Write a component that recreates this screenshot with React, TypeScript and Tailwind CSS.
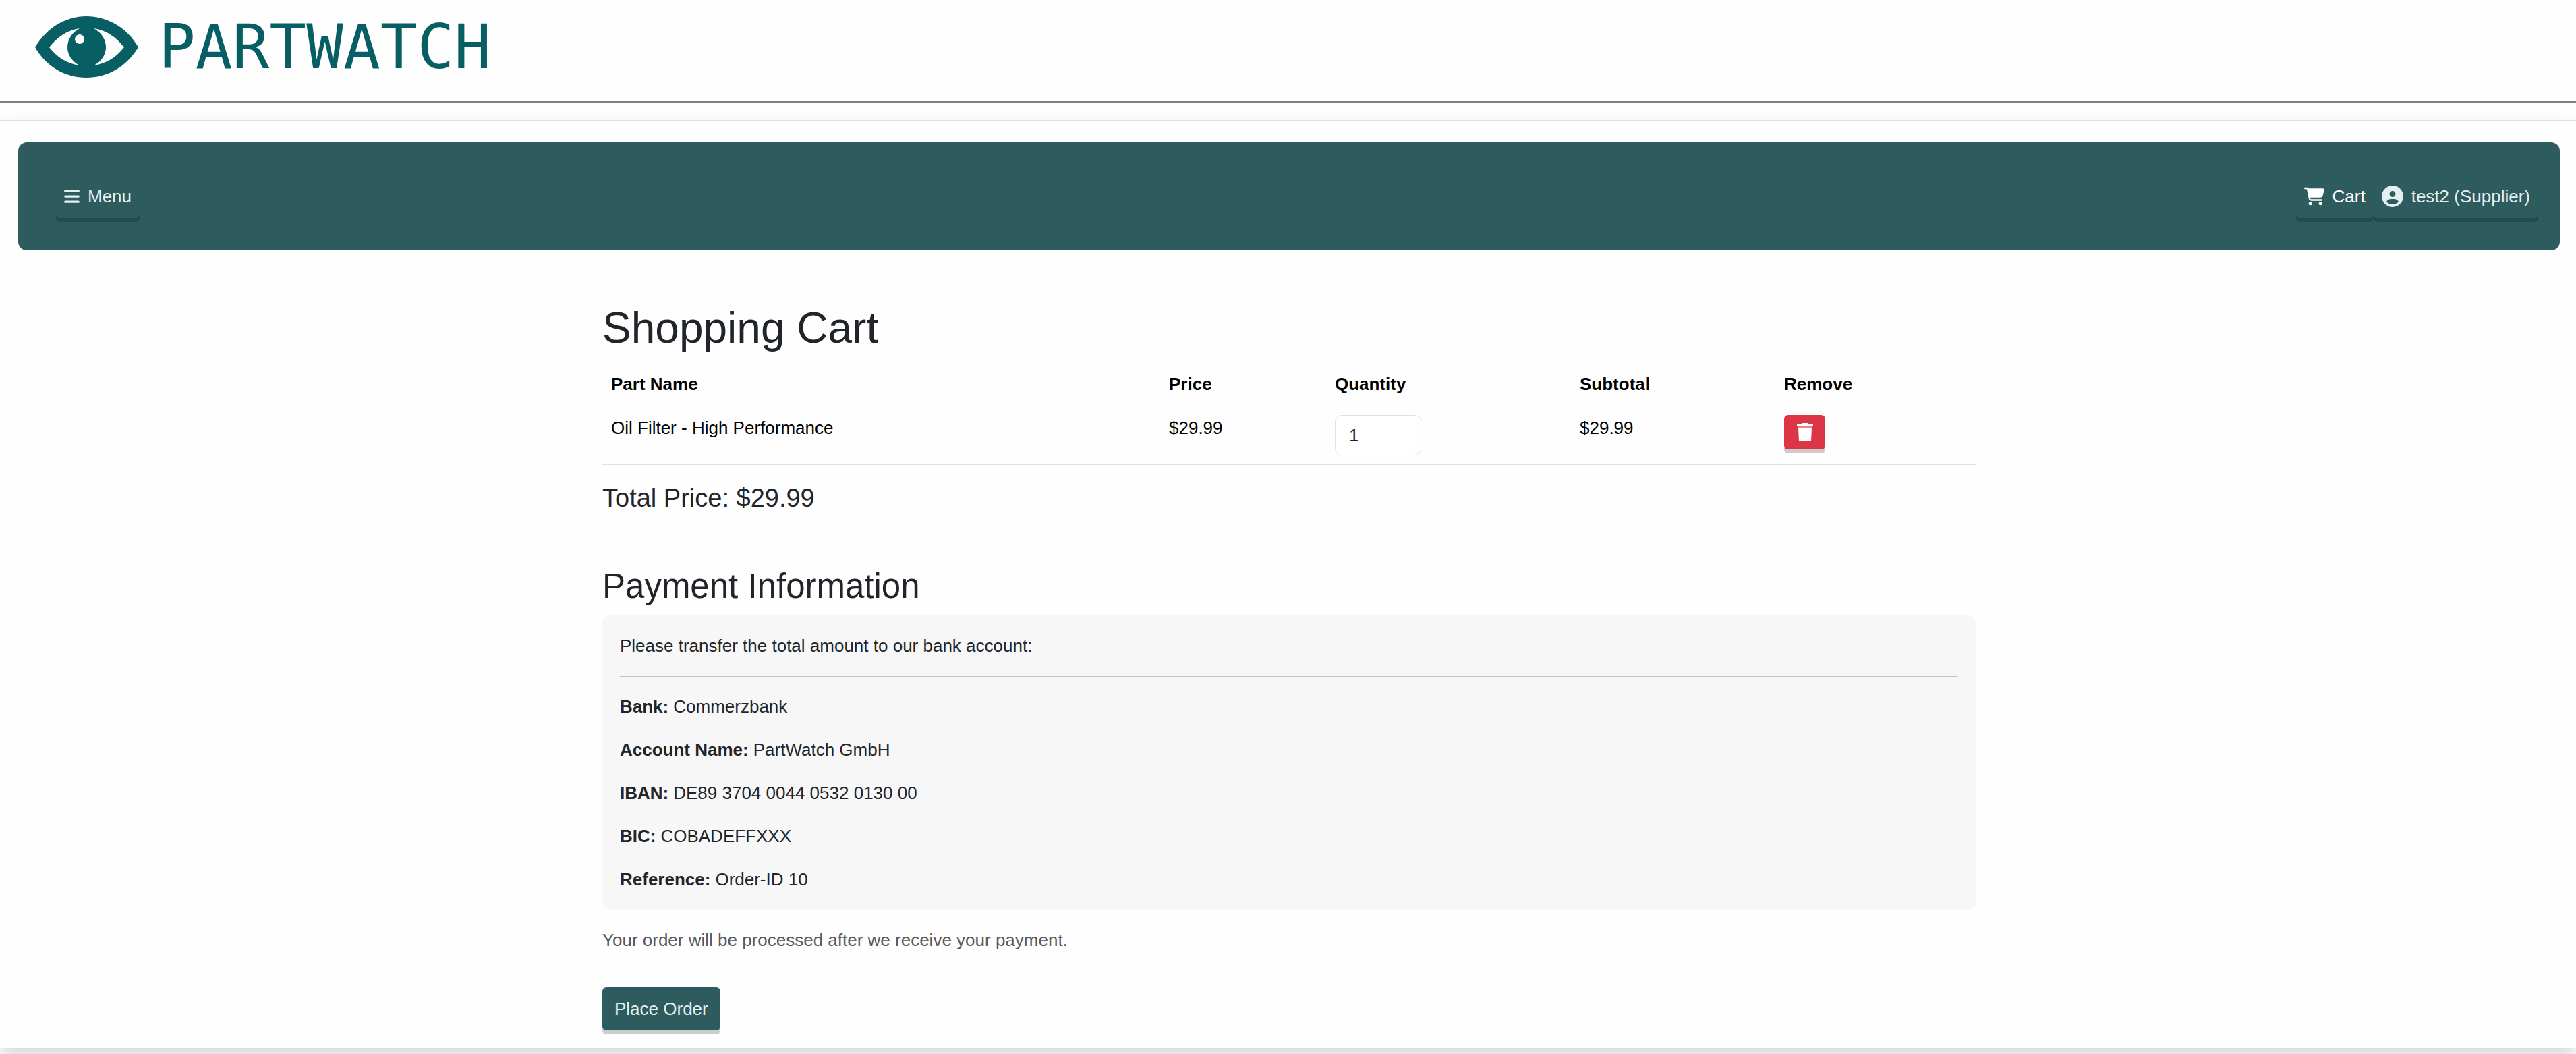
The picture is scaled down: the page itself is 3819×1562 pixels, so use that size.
import { FaBars, FaCartShopping, FaCircleUser } from "react-icons/fa6";

const columns = ["Part Name", "Price", "Quantity", "Subtotal", "Remove"];

const bankDetails = [
  { label: "Bank:", value: "Commerzbank" },
  { label: "Account Name:", value: "PartWatch GmbH" },
  { label: "IBAN:", value: "DE89 3704 0044 0532 0130 00" },
  { label: "BIC:", value: "COBADEFFXXX" },
  { label: "Reference:", value: "Order-ID 10" },
];

function EyeLogo() {
  return (
    <svg viewBox="0 0 153 91" className="h-[91px] w-[153px]" aria-hidden="true">
      <path fill="#085f63" d="M0 46C18 16 46 0 76 0s60 16 77 46C135 76 106 91 76 91S17 76 0 46Z" />
      <path fill="#fefefe" d="M21 46C32 32 46 21 66 18C42 31 42 61 66 73C46 70 32 60 21 46Z" />
      <path fill="#fefefe" d="M132 46C121 32 107 21 87 18C111 31 111 61 87 73C107 70 121 60 132 46Z" />
      <circle cx="66" cy="34" r="7" fill="#fefefe" />
    </svg>
  );
}

function TrashIcon() {
  return (
    <svg viewBox="0 0 24 27" className="h-[27px] w-6" aria-hidden="true">
      <path fill="#fff" d="M0 1h7l1-1h8l1 1h7v4H0Z" />
      <path fill="#fff" opacity=".4" d="M1 5h22l-1 2H2Z" />
      <path fill="#fff" d="M2 7h20l-1 19-1 1H4l-1-1Z" />
    </svg>
  );
}

export default function App() {
  return (
    <div className="min-h-screen bg-[#fefefe] font-['Liberation_Sans',Arial,sans-serif] text-[26px] leading-[38px] text-[#212529]">
      <header className="mb-[26px] flex h-[152px] items-start border-b-[3px] border-[#807e7e] pt-6 pl-13">
        <a href="#" className="flex items-center" aria-label="PartWatch home">
          <EyeLogo />
          <span className="pl-[30px] font-['DejaVu_Sans_Mono',monospace] text-[91px] leading-[91px] text-[#085f63]">PARTWATCH</span>
        </a>
      </header>
      <div className="border-t border-[#dedee6] bg-[#fefefe] pt-8 pb-[26px] pl-[3px] shadow-[0_13px_26px_rgba(0,0,0,0.15)]">
        <nav className="mx-6 flex h-40 items-center justify-between rounded-[13px] bg-[#2e5b5e] pr-8 pl-14 text-[#e4f0f0]">
          <button type="button" className="flex h-16 items-center gap-3 rounded-md px-3 shadow-[0_6px_0_#244a4c]">
            <FaBars className="h-[26px] w-[23px]" />
            Menu
          </button>
          <div className="flex">
            <a href="#cart" className="flex h-16 items-center gap-3 rounded-md px-3 text-white shadow-[0_6px_0_#244a4c]">
              <FaCartShopping className="size-[30px]" />
              Cart
            </a>
            <button type="button" className="flex h-16 items-center gap-3 rounded-md px-3 shadow-[0_6px_0_#244a4c]">
              <FaCircleUser className="size-8" />
              test2 (Supplier)
            </button>
          </div>
        </nav>

        <main className="mx-auto max-w-[2036px] pt-[77px]">
          <h1 className="mb-3 text-[64px] leading-[77px]">Shopping Cart</h1>
          <table className="w-full table-fixed text-left text-black">
            <colgroup>
              <col className="w-[827px]" />
              <col className="w-[246px]" />
              <col className="w-[363px]" />
              <col className="w-[303px]" />
              <col />
            </colgroup>
            <thead>
              <tr className="border-b border-[#dee2e6]">
                {columns.map((name) => (
                  <th key={name} scope="col" className="px-[13px] py-[13px] font-bold">{name}</th>
                ))}
              </tr>
            </thead>
            <tbody>
              <tr className="border-b border-[#dee2e6] align-top">
                <td className="px-[13px] py-[13px]">Oil Filter - High Performance</td>
                <td className="px-[13px] py-[13px]">$29.99</td>
                <td className="px-[13px] py-[13px]">
                  <input
                    type="text"
                    inputMode="numeric"
                    aria-label="Quantity"
                    defaultValue="1"
                    className="block h-[60px] w-32 rounded-[10px] border border-[#dee2e6] bg-white px-5 text-[#212529]"
                  />
                </td>
                <td className="px-[13px] py-[13px]">$29.99</td>
                <td className="px-[13px] py-[13px]">
                  <button
                    type="button"
                    aria-label="Remove"
                    className="flex h-[51px] w-[61px] items-center justify-center rounded-md bg-[#dc3545] shadow-[0_6px_0_#cccccc]"
                  >
                    <TrashIcon />
                  </button>
                </td>
              </tr>
            </tbody>
          </table>
          <h3 className="mt-[26px] text-[38px] leading-[46px]">Total Price: $29.99</h3>

          <h2 className="mt-[77px] mb-[13px] text-[51px] leading-[61px]">Payment Information</h2>
          <section className="rounded-[10px] bg-[#f7f7f7] p-[26px]">
            <p>Please transfer the total amount to our bank account:</p>
            <hr className="mt-[26px] mb-[25px] border-[#c2c3c4]" />
            <dl className="flex flex-col gap-[26px]">
              {bankDetails.map(({ label, value }) => (
                <div key={label} className="flex gap-[7px]">
                  <dt className="font-bold">{label}</dt>
                  <dd>{value}</dd>
                </div>
              ))}
            </dl>
          </section>
          <p className="mt-[26px] text-[#58595c]">Your order will be processed after we receive your payment.</p>
          <button
            type="button"
            className="mt-[51px] flex h-16 items-center rounded-md bg-[#2e5b5e] px-[18px] text-[#e4f0f0] shadow-[0_6px_0_#cccccc]"
          >
            Place Order
          </button>
        </main>
      </div>
    </div>
  );
}
